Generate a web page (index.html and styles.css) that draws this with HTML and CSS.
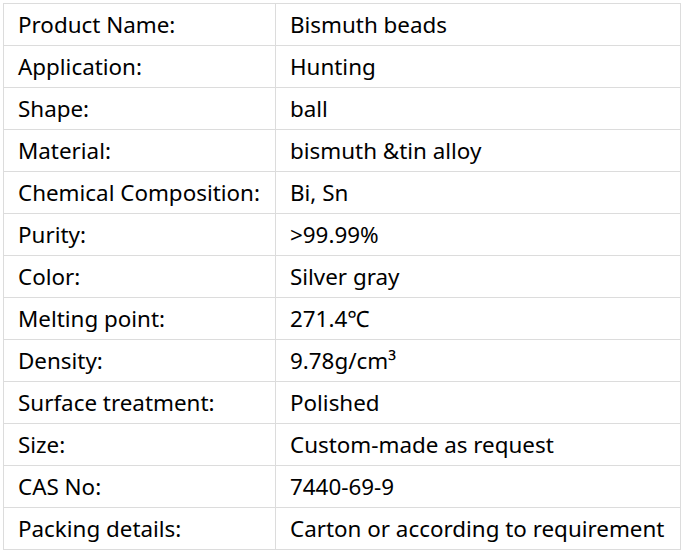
FILE: index.html
```html
<!DOCTYPE html>
<html>
<head>
<meta charset="utf-8">
<link rel="stylesheet" href="styles.css">
</head>
<body>
<table class="spec">
<colgroup><col class="c1"><col class="c2"></colgroup>
<tr><td>Product Name:</td><td>Bismuth beads</td></tr>
<tr><td>Application:</td><td>Hunting</td></tr>
<tr><td>Shape:</td><td>ball</td></tr>
<tr><td>Material:</td><td>bismuth &amp;tin alloy</td></tr>
<tr><td>Chemical Composition:</td><td>Bi, Sn</td></tr>
<tr><td>Purity:</td><td>&gt;99.99%</td></tr>
<tr><td>Color:</td><td>Silver gray</td></tr>
<tr><td>Melting point:</td><td>271.4℃</td></tr>
<tr><td>Density:</td><td>9.78g/cm³</td></tr>
<tr><td>Surface treatment:</td><td>Polished</td></tr>
<tr><td>Size:</td><td>Custom-made as request</td></tr>
<tr><td>CAS No:</td><td>7440-69-9</td></tr>
<tr><td>Packing details:</td><td>Carton or according to requirement</td></tr>
</table>
</body>
</html>
```
FILE: styles.css
```css
html, body { margin: 0; padding: 0; background: #fff; }
body { padding: 3px; font-family: "Noto Sans", "Open Sans", sans-serif; color: #000; }
.spec { border-collapse: collapse; table-layout: fixed; width: 677px; }
.c1 { width: 272px; }
.c2 { width: 405px; }
.spec td { border: 1px solid #dcdcdc; height: 41px; padding: 0 0 0 14px; font-size: 22.4px; line-height: 41px; box-sizing: border-box; white-space: nowrap; }
```
